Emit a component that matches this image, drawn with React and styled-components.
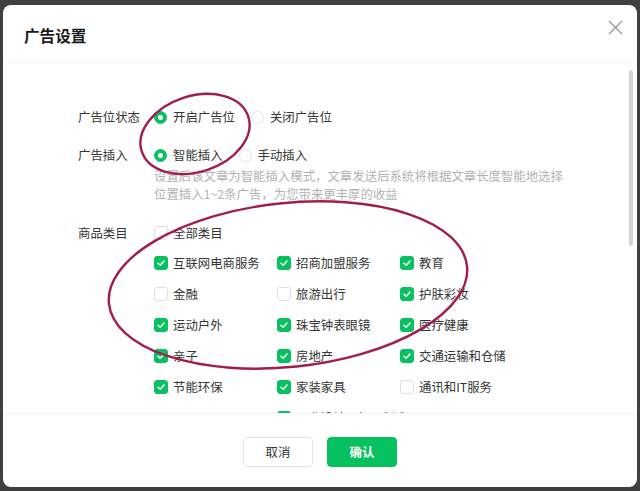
import React from 'react';
import styled, { createGlobalStyle } from 'styled-components';

const GlobalStyle = createGlobalStyle`
  html, body {
    margin: 0;
    padding: 0;
    background: #404040;
    font-family: "Noto Sans CJK SC", "Noto Sans", "Liberation Sans", sans-serif;
  }
  * {
    box-sizing: border-box;
  }
`;

const Page = styled.div`
  position: relative;
  width: 640px;
  height: 491px;
  padding: 5px 3px 4px 3px;
`;

const Modal = styled.div`
  height: 100%;
  background: #ffffff;
  border-radius: 8px;
  display: flex;
  flex-direction: column;
  overflow: hidden;
`;

const Header = styled.div`
  height: 58px;
  flex: none;
  display: flex;
  justify-content: space-between;
  align-items: flex-start;
  padding: 0 10px 0 21px;
  border-bottom: 1px solid #f3f3f3;
`;

const Title = styled.h3`
  margin: 20px 0 0;
  font-size: 15.6px;
  line-height: 20px;
  font-weight: 700;
  color: #1a1a1a;
`;

const CloseButton = styled.button`
  margin-top: 10px;
  width: 24px;
  height: 24px;
  padding: 0;
  border: none;
  background: none;
  display: flex;
  align-items: center;
  justify-content: center;
`;

const BodyWrap = styled.div`
  position: relative;
  flex: 1;
  min-height: 0;
`;

const Body = styled.div`
  height: 100%;
  overflow: hidden;
  padding: 42px 0 40px 75px;
  font-size: 12.4px;
  color: #353535;
`;

const ScrollThumb = styled.div`
  position: absolute;
  right: 4px;
  top: 7px;
  width: 4px;
  height: 176px;
  border-radius: 2px;
  background: #d4d4d4;
`;

const FormRow = styled.div`
  display: flex;
  align-items: flex-start;
  margin-top: ${(p) => p.$gap || 0}px;
`;

const Label = styled.div`
  width: 76px;
  flex: none;
  line-height: ${(p) => p.$lh || 24}px;
  color: #353535;
`;

const Control = styled.div`
  display: flex;
  flex-direction: column;
`;

const RadioGroup = styled.div`
  display: flex;
  align-items: center;
  height: 24px;
`;

const RadioOption = styled.label`
  display: flex;
  align-items: center;
  gap: 6px;
  margin-right: 16px;
`;

const RadioDot = styled.span`
  position: relative;
  width: 13px;
  height: 13px;
  border-radius: 50%;
  background: ${(p) => (p.$checked ? '#07c160' : '#fff')};
  border: 1px solid ${(p) => (p.$checked ? '#07c160' : '#e2e2e2')};

  &::after {
    content: '';
    display: ${(p) => (p.$checked ? 'block' : 'none')};
    position: absolute;
    left: 50%;
    top: 50%;
    width: 5px;
    height: 5px;
    margin: -2.5px 0 0 -2.5px;
    border-radius: 50%;
    background: #fff;
  }
`;

const Hint = styled.div`
  color: #b2b2b2;
  line-height: 18px;
`;

const CheckList = styled.div`
  display: flex;
  flex-direction: column;
`;

const AllRow = styled.div`
  margin-bottom: 10px;
`;

const CheckGrid = styled.div`
  display: grid;
  grid-template-columns: repeat(3, 123px);
  row-gap: 11px;
`;

const CheckItem = styled.label`
  display: flex;
  align-items: center;
  gap: 5px;
  height: 20px;
  white-space: nowrap;
`;

const CheckBox = styled.span`
  width: 14px;
  height: 14px;
  flex: none;
  border-radius: 3px;
  display: flex;
  align-items: center;
  justify-content: center;
  background: ${(p) => (p.$checked ? '#07c160' : '#fff')};
  border: 1px solid ${(p) => (p.$checked ? '#07c160' : '#e0e0e0')};
`;

const Footer = styled.div`
  height: 74px;
  flex: none;
  border-top: 1px solid #f3f3f3;
  display: flex;
  justify-content: center;
  gap: 14px;
  padding-top: 23px;
`;

const Button = styled.button`
  width: 70px;
  height: 30px;
  border-radius: 4px;
  font-family: inherit;
  font-size: 12.4px;
  font-weight: ${(p) => (p.$primary ? 700 : 400)};
  color: ${(p) => (p.$primary ? '#fff' : '#353535')};
  background: ${(p) => (p.$primary ? '#07c160' : '#fff')};
  border: 1px solid ${(p) => (p.$primary ? '#07c160' : '#e4e4e4')};
`;

const Marks = styled.svg`
  position: absolute;
  left: 0;
  top: 0;
  pointer-events: none;
`;

const categories = [
  { name: '互联网电商服务', checked: true },
  { name: '招商加盟服务', checked: true },
  { name: '教育', checked: true },
  { name: '金融', checked: false },
  { name: '旅游出行', checked: false },
  { name: '护肤彩妆', checked: true },
  { name: '运动户外', checked: true },
  { name: '珠宝钟表眼镜', checked: true },
  { name: '医疗健康', checked: true },
  { name: '亲子', checked: true },
  { name: '房地产', checked: true },
  { name: '交通运输和仓储', checked: true },
  { name: '节能环保', checked: true },
  { name: '家装家具', checked: true },
  { name: '通讯和IT服务', checked: false },
  null,
  { name: '工业设计及加工制造', checked: true },
  null,
];

const Check = () => (
  <svg width="10" height="10" viewBox="0 0 10 10">
    <path d="M2 5.2 L4.2 7.3 L8 3" fill="none" stroke="#fff" strokeWidth="1.5" strokeLinecap="round" strokeLinejoin="round" />
  </svg>
);

const Checkbox = ({ name, checked }) => (
  <CheckItem>
    <CheckBox $checked={checked}>{checked && <Check />}</CheckBox>
    {name}
  </CheckItem>
);

const App = () => (
  <>
    <GlobalStyle />
    <Page>
      <Modal>
        <Header>
          <Title>广告设置</Title>
          <CloseButton aria-label="关闭">
            <svg width="15" height="15" viewBox="0 0 15 15">
              <path d="M1 1 L14 14 M14 1 L1 14" stroke="#9a9a9a" strokeWidth="1.4" />
            </svg>
          </CloseButton>
        </Header>
        <BodyWrap>
          <Body>
            <FormRow>
              <Label>广告位状态</Label>
              <RadioGroup>
                <RadioOption><RadioDot $checked />开启广告位</RadioOption>
                <RadioOption><RadioDot />关闭广告位</RadioOption>
              </RadioGroup>
            </FormRow>
            <FormRow $gap={14}>
              <Label>广告插入</Label>
              <Control>
                <RadioGroup>
                  <RadioOption><RadioDot $checked />智能插入</RadioOption>
                  <RadioOption><RadioDot />手动插入</RadioOption>
                </RadioGroup>
                <Hint>
                  设置后该文章为智能插入模式，文章发送后系统将根据文章长度智能地选择
                  <br />
                  位置插入1~2条广告，为您带来更丰厚的收益
                </Hint>
              </Control>
            </FormRow>
            <FormRow $gap={20}>
              <Label $lh={20}>商品类目</Label>
              <CheckList>
                <AllRow>
                  <Checkbox name="全部类目" checked={false} />
                </AllRow>
                <CheckGrid>
                  {categories.map((c, i) =>
                    c ? <Checkbox key={i} name={c.name} checked={c.checked} /> : <span key={i} />
                  )}
                </CheckGrid>
              </CheckList>
            </FormRow>
          </Body>
          <ScrollThumb />
        </BodyWrap>
        <Footer>
          <Button>取消</Button>
          <Button $primary>确认</Button>
        </Footer>
      </Modal>
      <Marks width="640" height="491" viewBox="0 0 640 491">
        <ellipse cx="195" cy="134" rx="56" ry="38" transform="rotate(-18 195 134)" fill="none" stroke="#a11d4c" strokeWidth="2.4" />
        <ellipse cx="288" cy="285" rx="180" ry="82" transform="rotate(-6 288 285)" fill="none" stroke="#a11d4c" strokeWidth="2.4" />
      </Marks>
    </Page>
  </>
);

export default App;
